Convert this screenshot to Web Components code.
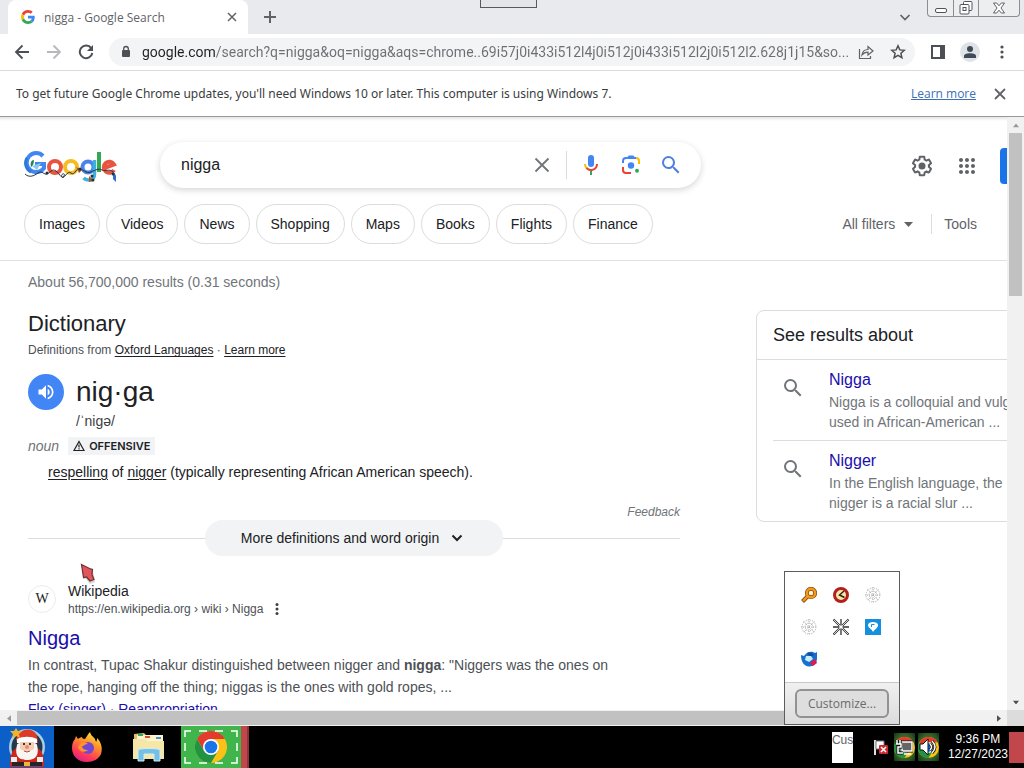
<!DOCTYPE html>
<html lang="en">
<head>
<meta charset="utf-8">
<title>Google Search</title>
<style>
html,body{margin:0;height:100%}
body{font-family:"Liberation Sans",Arial,sans-serif;color:#202124;background:#fff;overflow:hidden}
</style>
</head>
<body>
<desk-top></desk-top>
<script>
const define = (name, css, html) => {
  const t = document.createElement('template');
  t.innerHTML = `<style>*{box-sizing:border-box}button{font:inherit;color:inherit;background:none;border:0;padding:0;margin:0}svg{display:block;flex:none}a{color:inherit;text-decoration:none}${css}</style>${html}`;
  customElements.define(name, class extends HTMLElement {
    constructor() {
      super();
      this.attachShadow({ mode: 'open' }).append(t.content.cloneNode(true));
    }
  });
};

const magnifier = (size, color) => `<svg width="${size}" height="${size}" viewBox="0 0 24 24" fill="${color}"><path d="M15.5 14h-.79l-.28-.27A6.47 6.47 0 0 0 16 9.5 6.5 6.5 0 1 0 9.5 16c1.61 0 3.09-.59 4.23-1.57l.27.28v.79l5 4.99L20.49 19l-4.99-5zm-6 0C7.01 14 5 11.99 5 9.5S7.01 5 9.5 5 14 7.01 14 9.5 11.99 14 9.5 14z"/></svg>`;
const chromeLogo = size => `<svg width="${size}" height="${size}" viewBox="0 0 48 48"><circle cx="24" cy="24" r="24" fill="#fbc116"/><path d="M3.2 12A24 24 0 0 1 44.8 12H24L13.6 30z" fill="#e33b2e"/><path d="M3.2 12A24 24 0 0 0 24 48L34.4 30H13.6z" fill="#229342"/><circle cx="24" cy="24" r="12" fill="#fff"/><circle cx="24" cy="24" r="9.5" fill="#1a73e8"/></svg>`;

define('tab-strip', `
:host{display:flex;height:34px;background:#e8eaed;position:relative;padding-left:8px;color:#5f6368;flex:none;font:12px "Open Sans","Noto Sans",sans-serif}
.tab{display:flex;align-items:center;width:240px;background:#fff;border-radius:8px 8px 0 0;padding:0 8px 0 13px;color:#5f6368}
.tab span{flex:1;margin-left:9px}
.new{width:44px;display:grid;place-items:center}
.drop{margin-left:auto;margin-right:112px;align-self:center}
.stub{position:absolute;left:480px;top:0;width:57px;height:8px;border:1px solid #57595d;border-top:0;background:#e3e5e8}
.win{position:absolute;right:4px;top:0;height:17px;display:flex;border:1px solid #8b8d91;border-top:0;border-radius:0 0 4px 4px;background:#eceef0}
.win button{width:25px;display:grid;place-items:center}
.win button+button{border-left:1px solid #8b8d91}
.win button:last-child{width:41px}`,
`<div class="tab"><svg width="14" height="14" viewBox="0 0 48 48"><path fill="#EA4335" d="M24 9.5c3.54 0 6.71 1.22 9.21 3.6l6.85-6.85C35.9 2.38 30.47 0 24 0 14.62 0 6.51 5.38 2.56 13.22l7.98 6.19C12.43 13.72 17.74 9.5 24 9.5z"/><path fill="#4285F4" d="M46.98 24.55c0-1.57-.15-3.09-.38-4.55H24v9.02h12.94c-.58 2.96-2.26 5.48-4.78 7.18l7.73 6c4.51-4.18 7.09-10.36 7.09-17.65z"/><path fill="#FBBC05" d="M10.53 28.59A14.5 14.5 0 0 1 9.77 24c0-1.6.27-3.14.76-4.59l-7.98-6.19A23.9 23.9 0 0 0 0 24c0 3.88.92 7.54 2.56 10.78z"/><path fill="#34A853" d="M24 48c6.48 0 11.93-2.13 15.89-5.81l-7.73-6c-2.15 1.45-4.92 2.3-8.16 2.3-6.26 0-11.57-4.22-13.47-9.91l-7.98 6.19C6.51 42.62 14.62 48 24 48z"/></svg>
<span>nigga - Google Search</span><button aria-label="Close tab"><svg width="16" height="16" viewBox="0 0 16 16" stroke="#5f6368" stroke-width="1.5"><path d="M4 4l8 8M12 4l-8 8"/></svg></button></div>
<button class="new" aria-label="New tab"><svg width="12" height="12" viewBox="0 0 12 12" stroke="#5f6368" stroke-width="2"><path d="M6 0v12M0 6h12"/></svg></button>
<button class="drop" aria-label="Search tabs"><svg width="14" height="10" viewBox="0 0 14 10" fill="none" stroke="#5f6368" stroke-width="1.700"><path d="M2.500 3l4.500 4.500L11.500 3"/></svg></button>
<div class="stub"></div>
<div class="win"><button aria-label="Minimize"><svg width="14" height="14" viewBox="0 0 14 14" fill="#fff" stroke="#50545c"><rect x="1.500" y="7.500" width="11" height="4" rx="1.500"/></svg></button><button aria-label="Restore"><svg width="14" height="14" viewBox="0 0 14 14" fill="#fff" stroke="#50545c"><rect x="4.500" y=".500" width="8.500" height="9" rx="1"/><rect x="1" y="3.500" width="9" height="9.500" rx="1"/><rect x="4" y="6.500" width="3" height="3"/></svg></button><button aria-label="Close"><svg width="14" height="14" viewBox="0 0 14 14" fill="#fff" stroke="#50545c" stroke-width=".9"><path d="M1.500 2h3.200L7 4.800 9.300 2h3.200L9 7l3.500 5H9.300L7 9.200 4.700 12H1.500L5 7z"/></svg></button></div>`);

define('tool-bar', `
:host{display:flex;align-items:center;height:37px;flex:none;border-bottom:1px solid #d9dbde;padding:0 12px;background:#fff}
button{display:grid;place-items:center;width:20px;height:28px;margin-right:12px}
.omni{flex:1;min-width:0;display:flex;align-items:center;height:28px;border-radius:14px;background:#f3f4f5;padding:0 7px 0 11px;margin-left:1px;margin-right:13px}
.omni button{margin:0 0 0 12px}
input{flex:1;min-width:0;border:0;outline:0;padding:0;margin-left:10px;font:14px Roboto,"Open Sans",sans-serif;height:24px;text-overflow:ellipsis;color:transparent;background:linear-gradient(90deg,#202124 74px,#6b6f74 74px);-webkit-background-clip:text;background-clip:text}
.omni input+button{margin-left:0}
button:last-child{margin-right:0}
.me{border-radius:50%;background:#dfe3e8;height:20px}`,
`<button aria-label="Back"><svg width="16" height="16" viewBox="0 0 16 16" fill="none" stroke="#4c4f53" stroke-width="1.800"><path d="M15 8H2M8.500 1.500L2 8l6.500 6.500"/></svg></button>
<button aria-label="Forward"><svg width="16" height="16" viewBox="0 0 16 16" fill="none" stroke="#b6b8bb" stroke-width="1.800"><path d="M1 8h13M7.500 1.500L14 8l-6.500 6.500"/></svg></button>
<button aria-label="Reload"><svg width="16" height="16" viewBox="0 0 16 16" fill="none" stroke="#4c4f53" stroke-width="2"><path d="M13.200 4.200A6.300 6.300 0 1 0 14.300 9"/><path d="M15 1v6H9z" fill="#4c4f53" stroke="none"/></svg></button>
<div class="omni"><svg width="12" height="14" viewBox="0 0 12 14"><rect x="2" y="5" width="8" height="7" rx="1" fill="#4c4f53"/><path d="M3.700 5.500V3.800a2.300 2.300 0 0 1 4.600 0v1.700" fill="none" stroke="#4c4f53" stroke-width="1.300"/></svg>
<input aria-label="Address" value="google.com/search?q=nigga&amp;oq=nigga&amp;aqs=chrome..69i57j0i433i512l4j0i512j0i433i512l2j0i512l2.628j1j15&amp;so...">
<button aria-label="Share"><svg width="16" height="16" viewBox="0 0 16 16" fill="none" stroke="#5f6368" stroke-width="1.200"><path d="M1.500 5v9.500h11V12"/><path d="M4 11c.5-4 3-5.500 6-5.500V2.500L15 7l-5 4V8.200C7 8.200 5.500 9 4 11z"/></svg></button>
<button aria-label="Bookmark"><svg width="16" height="16" viewBox="0 0 16 16" fill="none" stroke="#4c4f53" stroke-width="1.500"><path d="M8 1.800l1.800 4.100 4.500.4-3.400 3 1 4.400L8 11.400l-3.900 2.300 1-4.400-3.400-3 4.500-.4z"/></svg></button></div>
<button aria-label="Side panel"><svg width="14" height="14" viewBox="0 0 14 14"><rect x="1" y="1" width="12" height="12" fill="none" stroke="#4c4f53" stroke-width="2"/><path d="M9 0h5v14H9z" fill="#4c4f53"/></svg></button>
<button class="me" aria-label="Profile"><svg width="12" height="12" viewBox="0 0 12 12" fill="#3f4b58"><circle cx="6" cy="3" r="3"/><path d="M0 12V9.800C0 8 3 7.200 6 7.200s6 .8 6 2.600V12z"/></svg></button>
<button aria-label="Menu"><svg width="4" height="14" viewBox="0 0 4 14" fill="#4c4f53"><circle cx="2" cy="2" r="1.600"/><circle cx="2" cy="7" r="1.600"/><circle cx="2" cy="12" r="1.600"/></svg></button>`);

define('info-bar', `
:host{display:flex;align-items:center;height:46px;flex:none;border-bottom:1px solid #999;padding:0 16px;background:#fff;font:12px "Noto Sans","Open Sans",sans-serif;color:#3a3c40}
a{margin-left:auto;color:#3b6fb6;text-decoration:underline;font-family:"Open Sans",sans-serif}
button{margin-left:16px}`,
`<span>To get future Google Chrome updates, you'll need Windows 10 or later. This computer is using Windows 7.</span><a href="#">Learn more</a><button aria-label="Dismiss"><svg width="16" height="16" viewBox="0 0 16 16" stroke="#5f6368" stroke-width="1.800"><path d="M3 3l10 10M13 3L3 13"/></svg></button>`);

define('holiday-logo', `:host{display:block;width:94px;height:36px}`,
`<svg width="94" height="36" viewBox="0 0 94 36" fill="none" role="img" aria-label="Google"><g stroke-width="4">
<path d="M19 6A9.500 9.500 0 1 0 20 18V14H11" stroke="#4285f4"/><path d="M3 8A10 10 0 0 0 7 22" stroke="#2d78d8" stroke-width="3"/>
<circle cx="31" cy="17" r="6" stroke="#e8543f"/><circle cx="47" cy="17" r="6" stroke="#f5bd20"/>
<circle cx="64" cy="17" r="5.500" stroke="#4b83e8"/><path d="M70.500 10v14c0 7-8 7-11 4" stroke="#41aee0" stroke-width="3.500"/>
<path d="M75 2v20" stroke="#36a852"/><path d="M80 18l10-3.500A5.500 5.500 0 1 0 90 20" stroke="#e8543f"/></g>
<path d="M1 24c4 4 9 2 13-1s6 2 9 1 5-6 9-3 6 9 8 5-4-2-2 1 5-7 9-4 4-4 8-4 7 5 12 3 7-4 11-2 7-2 11 2 0 6 2 8" stroke="#26323c" stroke-width="1"/>
<path d="M7 17c-1-4 0-7 3-7 0 3-1 6-3 7z" fill="#25845b"/><path d="M8 16l9-3-4 7z" fill="#8ec9e8"/>
<path d="M52 17l6 3-3 3zM65 26l5 5-5 1z" fill="#a4582b"/><path d="M89 21l3 5v6l-3-3z" fill="#356bca"/>
<g fill="#24333a"><circle cx="23" cy="23" r="1.500"/><circle cx="56" cy="19" r="1.500"/><circle cx="68" cy="26" r="1.500"/><circle cx="69" cy="30" r="1.500"/><circle cx="89" cy="24" r="1.500"/></g></svg>`);

define('filter-chip', `
:host{display:block}
a{display:block;height:40px;line-height:38px;border:1px solid #dadce0;border-radius:20px;padding:0 14px;font-size:14px;color:#202124;white-space:nowrap}`,
`<a href="#"><slot></slot></a>`);

define('search-header', `
:host{display:block;border-bottom:1px solid #dfe1e5;padding:17px 8px 16px 24px}
.top,.row,.box,.chips{display:flex;align-items:center}
.top{height:54px}
holiday-logo{margin-right:42px;margin-top:5px}
.box{width:541px;height:46px;border-radius:23px;box-shadow:0 2px 6px rgba(60,64,67,.22);padding:0 18px 0 21px}
input{flex:1;min-width:0;border:0;outline:0;padding:0;font:16px "Liberation Sans",Arial,sans-serif;color:#202124;background:none}
.box button{margin-left:16px;width:24px;display:grid;place-items:center}
.box .clear{margin:0 12px 0 0}
.box .mic{margin-left:12px}
.rule{width:1px;height:28px;background:#dadce0}
.side{display:flex;align-items:center;margin-left:auto;gap:21px;padding-top:2px}
.sign{width:96px;height:36px;border-radius:4px;background:#1a73e8}
.row{margin-top:12px}
.chips{gap:6px}
.tools{display:flex;align-items:center;margin-left:auto;margin-right:119px;font-size:14px;color:#5f6368}
.tools svg{margin:0 18px 0 9px}
.tools i{width:1px;height:20px;background:#dadce0;margin-right:12px}`,
`<div class="top"><holiday-logo></holiday-logo>
<div class="box"><input aria-label="Search" value="nigga"><button class="clear" aria-label="Clear"><svg width="24" height="24" viewBox="0 0 24 24" stroke="#70757a" stroke-width="1.800"><path d="M5.500 5.500l13 13M18.500 5.500l-13 13"/></svg></button><span class="rule"></span>
<button class="mic" aria-label="Voice search"><svg width="16" height="22" viewBox="0 0 16 22"><rect x="5" y="1" width="6" height="12" rx="3" fill="#4285f4"/><path d="M7 17h2v4H7z" fill="#34a853"/><path d="M2 10a6 6 0 0 0 2 4.500" fill="none" stroke="#fbbc04" stroke-width="2"/><path d="M3.500 14a6 6 0 0 0 10.500-4" fill="none" stroke="#ea4335" stroke-width="2"/></svg></button>
<button class="lens" aria-label="Search by image"><svg width="24" height="24" viewBox="0 0 24 24" fill="none" stroke-width="2"><path d="M4 10V8a3 3 0 0 1 3-3h10" stroke="#4285f4"/><path d="M8.500 4l1.200-1.500h4.600L15.500 4z" fill="#4285f4"/><path d="M17 5a3 3 0 0 1 3 3v3" stroke="#fbbc04"/><path d="M4 14v3a3 3 0 0 0 3 3h5" stroke="#ea4335"/><circle cx="12" cy="12.500" r="3.200" fill="#4285f4"/><circle cx="18" cy="17.800" r="2" fill="#34a853"/></svg></button>
<button aria-label="Search">${magnifier(24, '#4f7fe0')}</button></div>
<div class="side"><button aria-label="Settings"><svg width="24" height="24" viewBox="0 0 24 24" fill="#5f6368"><path d="M13.850 22.250h-3.700c-.74 0-1.360-.54-1.450-1.270l-.27-1.890c-.27-.14-.53-.29-.79-.46l-1.800.72c-.7.26-1.470-.03-1.810-.65L2.200 15.530c-.35-.66-.2-1.440.36-1.880l1.530-1.190c-.01-.15-.02-.3-.02-.46 0-.15.010-.31.020-.46l-1.520-1.190c-.59-.45-.74-1.260-.37-1.880l1.850-3.190c.34-.62 1.110-.9 1.790-.63l1.810.73c.26-.17.520-.32.780-.46l.27-1.910c.09-.7.710-1.250 1.440-1.250h3.700c.74 0 1.360.54 1.450 1.270l.27 1.890c.27.14.53.29.79.46l1.800-.72c.71-.26 1.480.03 1.820.65l1.840 3.180c.36.66.2 1.440-.36 1.880l-1.520 1.190c.1.150.2.300.2.460s-.1.310-.2.460l1.520 1.190c.56.45.72 1.230.37 1.860l-1.860 3.220c-.34.62-1.110.9-1.800.63l-1.800-.72c-.26.17-.52.32-.78.46l-.27 1.910c-.1.680-.72 1.220-1.460 1.220zm-3.230-2h2.760l.37-2.550.53-.22c.44-.18.880-.44 1.340-.78l.45-.34 2.380.96 1.380-2.400-2.030-1.580.07-.56c.03-.26.060-.51.060-.78s-.03-.53-.06-.78l-.07-.56 2.030-1.580-1.390-2.400-2.390.96-.45-.35c-.42-.32-.87-.58-1.330-.77l-.52-.22-.37-2.550h-2.760l-.37 2.550-.53.210c-.44.19-.88.440-1.340.79l-.45.33-2.380-.95-1.390 2.390 2.030 1.580-.07.560a7 7 0 0 0-.06.790c0 .26.020.53.060.78l.07.560-2.030 1.580 1.380 2.400 2.390-.96.450.350c.43.330.860.580 1.330.770l.53.220z"/><circle cx="12" cy="12" r="3.500"/></svg></button>
<button aria-label="Google apps"><svg width="24" height="24" viewBox="0 0 24 24" fill="#5f6368"><path d="M6 8c1.100 0 2-.9 2-2s-.9-2-2-2-2 .9-2 2 .9 2 2 2zm6 12c1.100 0 2-.9 2-2s-.9-2-2-2-2 .9-2 2 .9 2 2 2zm-6 0c1.100 0 2-.9 2-2s-.9-2-2-2-2 .9-2 2 .9 2 2 2zm0-6c1.100 0 2-.9 2-2s-.9-2-2-2-2 .9-2 2 .9 2 2 2zm6 0c1.100 0 2-.9 2-2s-.9-2-2-2-2 .9-2 2 .9 2 2 2zm4-8c0 1.100.9 2 2 2s2-.9 2-2-.9-2-2-2-2 .9-2 2zm-4 2c1.100 0 2-.9 2-2s-.9-2-2-2-2 .9-2 2 .9 2 2 2zm6 6c1.100 0 2-.9 2-2s-.9-2-2-2-2 .9-2 2 .9 2 2 2zm0 6c1.100 0 2-.9 2-2s-.9-2-2-2-2 .9-2 2 .9 2 2 2z"/></svg></button>
<button class="sign" aria-label="Sign in"></button></div></div>
<div class="row"><nav class="chips"><filter-chip>Images</filter-chip><filter-chip>Videos</filter-chip><filter-chip>News</filter-chip><filter-chip>Shopping</filter-chip><filter-chip>Maps</filter-chip><filter-chip>Books</filter-chip><filter-chip>Flights</filter-chip><filter-chip>Finance</filter-chip></nav>
<div class="tools"><button>All filters</button><svg width="9" height="5" viewBox="0 0 9 5" fill="#5f6368"><path d="M0 0h9L4.500 5z"/></svg><i></i><button>Tools</button></div></div>`);

define('dictionary-card', `
:host{display:block;font-size:14px}
h2{font-size:22px;font-weight:400;line-height:28px;margin:0}
a{text-decoration:underline;text-underline-offset:2px}
.src{font-size:12px;line-height:16px;margin-top:4px;color:#4d5156}
.src a{color:#202124}
.word{display:flex;gap:12px;margin-top:16px;line-height:36px;font-size:28px}
.say{width:36px;height:36px;border-radius:50%;background:#4285f4;display:grid;place-items:center}
.ipa{line-height:20px;margin:1px 0 0 48px;color:#3c4043}
.pos{display:flex;align-items:center;height:18px;margin-top:6px;gap:9px}
.pos i{color:#70757a}
.tag{display:flex;align-items:center;gap:4px;height:18px;background:#f1f3f4;padding:0 5px;font:600 11px Inter,sans-serif}
p{line-height:20px;margin:7px 0 0 20px}
.fb{display:block;text-align:right;text-decoration:none;font-style:italic;font-size:12px;line-height:16px;color:#70757a;margin-top:22px}
.more{display:flex;align-items:center}
.more::before,.more::after{content:"";flex:1;height:1px;background:#dadce0}
.more button{display:flex;align-items:center;justify-content:center;gap:12px;width:298px;height:36px;border-radius:18px;background:#f1f3f4;padding-right:4px}`,
`<h2>Dictionary</h2>
<div class="src">Definitions from <a href="#">Oxford Languages</a> · <a href="#">Learn more</a></div>
<div class="word"><button class="say" aria-label="Listen"><svg width="20" height="20" viewBox="0 0 24 24" fill="#fff"><path d="M3 9v6h4l5 5V4L7 9H3zm13.500 3A4.500 4.500 0 0 0 14 7.970v8.050c1.480-.73 2.500-2.250 2.500-4.020zM14 3.230v2.060c2.890.86 5 3.540 5 6.710s-2.110 5.850-5 6.710v2.060c4.010-.91 7-4.490 7-8.770s-2.990-7.860-7-8.770z"/></svg></button><span>nig·ga</span></div>
<div class="ipa">/ˈnigə/</div>
<div class="pos"><i>noun</i><span class="tag"><svg width="12" height="12" viewBox="0 0 12 12" fill="none" stroke="#202124" stroke-width="1.200"><path d="M6 1.500L11 10.500H1zM6 4.500v3M6 8.300v1.200"/></svg>OFFENSIVE</span></div>
<p><a href="#">respelling</a> of <a href="#">nigger</a> (typically representing African American speech).</p>
<a class="fb" href="#">Feedback</a>
<div class="more"><button>More definitions and word origin<svg width="12" height="8" viewBox="0 0 12 8" fill="none" stroke="#202124" stroke-width="2"><path d="M1.500 1.500L6 6l4.500-4.500"/></svg></button></div>`);

define('web-result', `
:host{display:block;margin-top:25px}
.site{display:flex;align-items:center;gap:12px}
.fav{width:28px;height:28px;border:1px solid #ecedef;border-radius:50%;display:grid;place-items:center;font:14px "Liberation Serif",serif;color:#202124}
.name{font-size:14px;line-height:20px}
.url{display:flex;align-items:center;font-size:12px;line-height:16px;color:#4d5156;gap:12px}
h3{font-size:20px;font-weight:400;line-height:26px;margin:8px 0 3px;color:#1a0dab}
p{font-size:14px;line-height:22px;margin:0;color:#4d5156;max-width:600px}
.links{color:#1a0dab}`,
`<div class="site"><span class="fav">W</span><div><div class="name">Wikipedia</div><div class="url">https://en.wikipedia.org › wiki › Nigga<button aria-label="About this result"><svg width="4" height="12" viewBox="0 0 4 12" fill="#3c4043"><circle cx="2" cy="1.500" r="1.500"/><circle cx="2" cy="6" r="1.500"/><circle cx="2" cy="10.500" r="1.500"/></svg></button></div></div></div>
<h3><a href="#">Nigga</a></h3>
<p>In contrast, Tupac Shakur distinguished between nigger and <b>nigga</b>: "Niggers was the ones on<br>the rope, hanging off the thing; niggas is the ones with gold ropes, ...</p>
<p class="links"><a href="#">Flex (singer)</a> · <a href="#">Reappropriation</a></p>`);

define('related-item', `
:host{display:flex;height:80px;padding-top:10px;margin-left:16px}
svg{margin:6px 24px 0 8px}
.t{display:block;font-size:16px;line-height:20px;color:#1a0dab}
.d{font-size:14px;line-height:20px;margin-top:2px;color:#70757a;white-space:pre}`,
`${magnifier(24, '#70757a')}<div><a class="t" href="#"><slot name="title"></slot></a><div class="d"><slot></slot></div></div>`);

define('related-panel', `
:host{display:block;border:1px solid #dadce0;border-radius:8px}
h2{font-size:18px;font-weight:400;line-height:48px;margin:0;padding-left:16px;border-bottom:1px solid #dadce0}
hr{border:0;height:1px;background:#dadce0;margin:0 0 0 16px}`,
`<h2>See results about</h2><related-item><span slot="title">Nigga</span>Nigga is a colloquial and vulgar<br>used in African-American ...</related-item><hr><related-item><span slot="title">Nigger</span>In the English language, the<br>nigger is a racial slur ...</related-item>`);

define('results-page', `
:host{display:block;min-width:1104px}
.shade{height:4px;background:linear-gradient(#e4e4e4,#fff)}
.stats{font-size:14px;line-height:20px;color:#70757a;padding:11px 28px 0}
.cols{display:grid;grid-template-columns:652px 1fr;column-gap:76px;padding:18px 0 0 28px;align-items:start}`,
`<div class="shade"></div><search-header></search-header><div class="stats">About 56,700,000 results (0.31 seconds)</div>
<div class="cols"><main><dictionary-card></dictionary-card><web-result></web-result></main><related-panel></related-panel></div>`);

define('scroll-bar', `
:host{display:flex;align-items:center;background:#f1f1f1}
:host([vertical]){flex-direction:column}
.b{width:17px;height:16px;display:grid;place-items:center;flex:none}
.track{flex:1;align-self:stretch;display:flex;justify-content:flex-start}
.thumb{background:#c1c1c1;width:86%;margin:1px 0}
:host([vertical]) .thumb{width:auto;flex:1;height:29%;margin:0 2px}
:host([vertical]) .b svg{transform:rotate(90deg)}`,
`<span class="b"><svg width="4" height="7" viewBox="0 0 5 8" fill="#9a9a9a"><path d="M5 0v8L0 4z"/></svg></span><div class="track"><div class="thumb"></div></div><span class="b"><svg width="4" height="7" viewBox="0 0 5 8" fill="#505050"><path d="M0 0v8l5-4z"/></svg></span>`);

define('tray-popup', `
:host{display:flex;flex-direction:column;width:116px;height:154px;border:1px solid #5c5c5c;background:#fff}
.g{flex:1;display:grid;grid-template-columns:repeat(3,32px);grid-auto-rows:32px;justify-content:center;place-items:center;padding:7px 2px 0 0}
.f{height:42px;border-top:1px solid #c8c8c8;background:linear-gradient(#f0f0f0,#dcdcdc);display:grid;place-items:center}
.f button{width:94px;height:29px;border:2px solid #929292;border-radius:6px;background:#dedede;font:12px "Open Sans","Noto Sans",sans-serif;color:#6b6b6b}`,
`<div class="g">
<svg width="16" height="16" viewBox="0 0 16 16"><path d="M1.500 14.500L7 9" stroke="#8a4a08" stroke-width="4"/><circle cx="10" cy="6" r="4.200" fill="#fff2d0" stroke="#8a4a08" stroke-width="3.800"/><circle cx="10" cy="6" r="4.200" fill="none" stroke="#f39a1c" stroke-width="2.400"/><path d="M2 14L7 9" stroke="#f39a1c" stroke-width="2.400"/></svg>
<svg width="16" height="16" viewBox="0 0 16 16"><circle cx="8" cy="8" r="6.500" fill="#f5e5a8" stroke="#b3201c" stroke-width="3"/><path d="M11 4L6.500 8l5 2.500" fill="none" stroke="#30201c" stroke-width="1.500"/></svg>
<svg width="16" height="16" viewBox="0 0 16 16" fill="none" stroke="#aaa" stroke-dasharray="1 1"><path d="M8 0v16M0 8h16M2.500 2.500l11 11M13.500 2.500l-11 11"/><circle cx="8" cy="8" r="4"/><circle cx="8" cy="8" r="7"/></svg>
<svg width="16" height="16" viewBox="0 0 16 16" fill="none" stroke="#aaa" stroke-dasharray="1 1"><path d="M8 0v16M0 8h16M2.500 2.500l11 11M13.500 2.500l-11 11"/><circle cx="8" cy="8" r="4"/><circle cx="8" cy="8" r="7"/></svg>
<svg width="18" height="18" viewBox="0 0 18 18"><g stroke="#333" stroke-width="2"><path d="M9 1v16M1 9h16" stroke-width="1.300"/><path d="M1.500 1.500l15 15M16.500 1.500l-15 15"/></g><path d="M2 2l14 14M16 2L2 16" stroke="#fff" stroke-width=".8"/><circle cx="9" cy="9" r="1.800" fill="#fff"/></svg>
<svg width="16" height="16" viewBox="0 0 16 16"><path fill="#168fdc" d="M0 0h16v16H0z"/><path d="M3 6c0-4 10-4 10 0 0 3-3 4-5 7-1-3-5-4-5-7z" fill="#fff"/><path d="M6.500 8V5.500h3" fill="none" stroke="#168fdc"/></svg>
<svg width="16" height="16" viewBox="0 0 16 16"><path d="M0 4l3 1c2-4 7-5 9-4l2 1 2-1v7a7.500 7.500 0 0 1-8 7.500C3 15 0 11 0 4z" fill="#1670cf"/><path d="M6 2c3-1 5 0 7 2l-4 2z" fill="#174ba0"/><path d="M5 5l5 0 2 3-4 3-4-2z" fill="#c9efff"/><path d="M9 12l5-4 2 4-4 3z" fill="#e3184d"/></svg></div>
<div class="f"><button>Customize...</button></div>`);

define('browser-view', `
:host{flex:1;min-height:0;display:grid;grid-template-columns:minmax(0,1fr) 17px;grid-template-rows:minmax(0,1fr) 16px}
.page{overflow:hidden;background:#fff}
.corner{background:#dcdcdc}`,
`<div class="page"><results-page></results-page></div><scroll-bar vertical></scroll-bar><scroll-bar></scroll-bar><div class="corner"></div>`);

define('task-bar', `
:host{display:flex;align-items:center;height:42px;flex:none;background:#000;color:#fff;font-size:12px}
button{height:42px;display:grid;place-items:center;flex:none}
.start{width:54px;background:#0b5fc6}
.app{width:62px}
.start+.app{margin-left:2px}
.chrome{width:60px;background:#3fb54b;margin-left:1px}
.chrome svg{grid-area:1/1}
.red{width:8px;height:42px;background:linear-gradient(90deg,#c1474c 6px,#8c3438 6px)}
.cus{margin-left:auto;width:21px;height:31px;background:#fff;color:#60646a;overflow:hidden;line-height:16px}
.flag{margin:0 5px 0 20px}
.tray{width:21px;height:28px;display:grid;place-items:center;background:radial-gradient(#6a9a2c,#2c5a26 70%,#123012);margin-right:3px}
.tray svg{grid-area:1/1}
time{text-align:center;line-height:15px;margin-left:6px}
.end{width:15px;height:31px;background:#c1474c;margin-left:1px}`,
`<button class="start" aria-label="Start"><svg width="40" height="40" viewBox="0 0 40 40"><circle cx="20" cy="20" r="18" fill="#a9cfe4"/><circle cx="20" cy="20" r="15.500" fill="#23384a"/><path d="M3 40c-1-14 4-22 17-22s18 8 17 22z" fill="#cf251c"/><path d="M9 12C13 0 27 0 30 9l1 7H10z" fill="#dd3a28"/><path d="M9 1l2 3 4 0-3 3 1 4-4-2-4 2 1-4-3-3h4z" fill="#f2b326"/><path d="M10 12c6-3 14-3 20 0v4H10z" fill="#fff"/><path d="M10 18c0-4 20-4 20 0 3 12-3 15-10 15S7 30 10 18z" fill="#f8f6f3"/><path d="M13 15h14v6c0 4-14 4-14 0z" fill="#f3cdb5"/><circle cx="17" cy="17" r="1"/><circle cx="23" cy="17" r="1"/><circle cx="20" cy="20" r="2" fill="#e58a70"/><path d="M17 24q3 2 6 0" stroke="#b8433a" fill="none"/><path d="M4 30h6v5H4zM30 30h6v5h-6z" fill="#eee"/><path d="M5 35h30v4H5z" fill="#252525"/><path d="M17 35h6v4h-6z" fill="#e6b93a"/></svg></button>
<button class="app" aria-label="Firefox"><svg width="32" height="32" viewBox="0 0 32 32"><defs><linearGradient id="f" x1=".8" y1="0" x2=".3" y2="1"><stop stop-color="#fff04a"/><stop offset=".35" stop-color="#ff9a27"/><stop offset=".75" stop-color="#ff3b56"/><stop offset="1" stop-color="#d9218a"/></linearGradient></defs><path d="M19 1c1 4 3 4 5 7 0 1 1 2 1 3 1-1 1-3 1-4 4 4 6 10 4 16-2 5-8 8-14 8C7 31 1 25 1 17c0-4 1-7 3-9l1-3 2 3c1-1 3-2 4-2 0 1 1 2 3 2 2-3 3-5 5-7z" fill="url(#f)"/><circle cx="17" cy="17" r="6" fill="#7247d6"/><path d="M10 12c4-2 6 0 7 1-3 0-4 2-6 2 0 3 3 4 6 4-3 3-9 2-10-3z" fill="#ff9527"/></svg></button>
<button class="app" aria-label="Explorer"><svg width="34" height="32" viewBox="0 0 34 32"><path d="M2 3l10-1 2 2h17v24H2z" fill="#e1bf60"/><path d="M5 4h26v6H5z" fill="#fff5cc"/><path d="M6 3h5v2H6z" fill="#31a567"/><path d="M13 5h5v2h-5z" fill="#d95034"/><path d="M24 6h5v2h-5z" fill="#4a93d0"/><path d="M1 8h12l3 2h16v18H1z" fill="#f5e7a8"/><path d="M6 30V19c0-2 22-2 22 0v11h-6v-7H12v7z" fill="#77bfe4" stroke="#c9efff"/></svg></button>
<button class="chrome" aria-label="Chrome">${chromeLogo(32)}<svg width="54" height="34" viewBox="0 0 54 34" fill="none" stroke="#fff" stroke-width="1.500"><path d="M1 7V1h6M15 1h8M31 1h8M47 1h6v6M53 13v8M53 27v6h-6M39 33h-8M23 33h-8M7 33H1v-6M1 21v-8"/></svg></button><span class="red"></span>
<span class="cus">Cus</span>
<svg class="flag" width="16" height="16" viewBox="0 0 16 16"><path d="M2 1v15" stroke="#ddd" stroke-width="2"/><path d="M3 2h8v8H3z" fill="#fff" stroke="#777"/><rect x="6" y="6" width="9" height="9" rx="1" fill="#cf2630"/><path d="M8 8l5 5M13 8l-5 5" stroke="#fff" stroke-width="1.500"/></svg>
<span class="tray">${chromeLogo(21)}<svg width="18" height="18" viewBox="0 0 18 18"><path d="M7 4h10v9H7z" fill="#777" stroke="#111" stroke-width="3"/><path d="M7 4h10v9H7zM9 16h7" fill="#666" stroke="#fff" stroke-width="1.500"/><path d="M2 2v4M5 2v4M1 6h5v3H3v6h5" fill="none" stroke="#111" stroke-width="3"/><path d="M2 2v4M5 2v4M1 6h5v3H3v6h5" fill="none" stroke="#fff" stroke-width="1.500"/></svg></span>
<span class="tray">${chromeLogo(21)}<svg width="18" height="18" viewBox="0 0 18 18"><path d="M1 6h3l5-5v16l-5-5H1z" fill="#fff" stroke="#111"/><path d="M11 6c2 2 2 4 0 6M13 3c4 4 4 8 0 12" fill="none" stroke="#111" stroke-width="3"/><path d="M11 6c2 2 2 4 0 6M13 3c4 4 4 8 0 12" fill="none" stroke="#fff" stroke-width="1.500"/></svg></span>
<time>9:36 PM<br>12/27/2023</time><span class="end"></span>`);

define('mouse-pointer', `:host{display:block}`,
`<svg width="20" height="22" viewBox="0 0 20 22"><path d="M3 4l10 4 1 5 1 6-5 2-4-5-3 0z" fill="#888" opacity=".35"/><path d="M1.500 1.500l8 4 3 1-.5 5 2 5-4 1.500-3.500-4-3 .5z" fill="#e0565a" stroke="#6f3034" stroke-width="1.200"/></svg>`);

define('desk-top', `
:host{display:flex;flex-direction:column;height:100vh;position:relative;overflow:hidden}
tray-popup{position:absolute;right:124px;bottom:43px}
mouse-pointer{position:absolute;left:80px;top:563px}`,
`<tab-strip></tab-strip><tool-bar></tool-bar><info-bar></info-bar><browser-view></browser-view><task-bar></task-bar><tray-popup></tray-popup><mouse-pointer></mouse-pointer>`);
</script>
</body>
</html>
